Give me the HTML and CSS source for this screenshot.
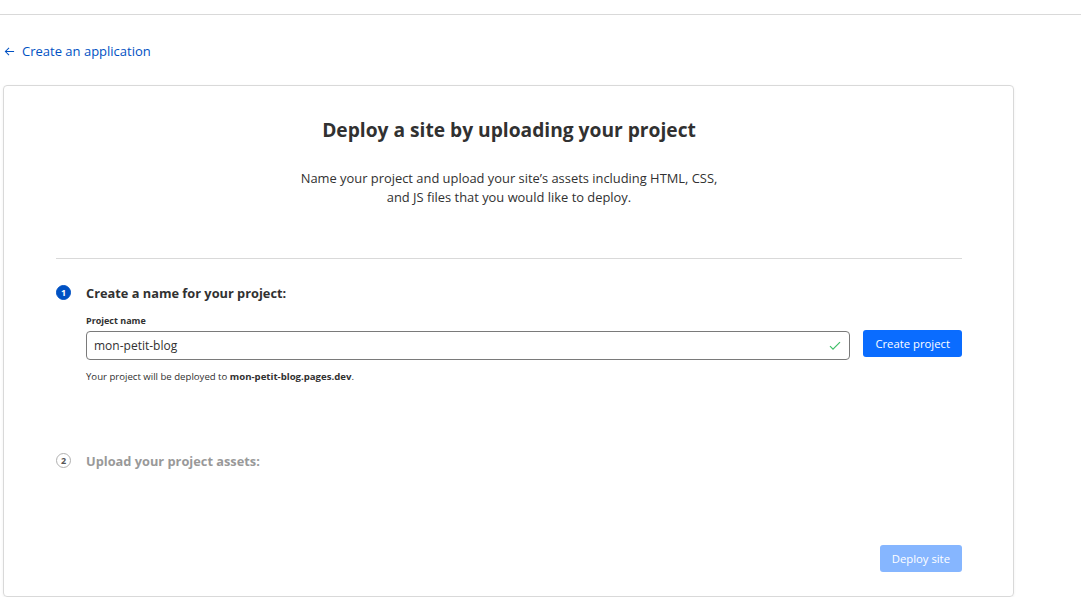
FILE: index.html
```html
<!DOCTYPE html>
<html lang="en">
<head>
  <meta charset="UTF-8" />
  <meta name="viewport" content="width=device-width, initial-scale=1.0"/>
  <title>Upload assets - Pages</title>
  <link rel="stylesheet" href="styles.css">
</head>
<body>

<div class="topbar"></div>

<main class="page">
  <a class="back-link" href="#">
    <svg width="11" height="11" viewBox="0 0 12 12" fill="none" stroke="currentColor" stroke-width="1.1">
      <path d="M11 6H1.5M5.5 2L1.5 6l4 4"/>
    </svg>
    Create an application
  </a>

  <section class="card">
    <h1>Deploy a site by uploading your project</h1>
    <p class="intro">Name your project and upload your site’s assets including HTML, CSS,<br>and JS files that you would like to deploy.</p>

    <hr class="divider">

    <div class="step">
      <div class="step-title">
        <span class="step-num active">1</span>
        <h2>Create a name for your project:</h2>
      </div>

      <div class="step-body">
        <label class="field-label" for="projectName">Project name</label>
        <div class="field-row">
          <div class="input-wrap">
            <input type="text" id="projectName" value="mon-petit-blog">
            <svg class="valid" width="12" height="10" viewBox="0 0 12 10" fill="none" stroke="#3fbf68" stroke-width="1.2">
              <path d="M1 5.2l3 3L11 1.2"/>
            </svg>
          </div>
          <button class="btn btn-primary">Create project</button>
        </div>
        <p class="hint">Your project will be deployed to <strong>mon-petit-blog.pages.dev</strong>.</p>
      </div>
    </div>

    <div class="step disabled">
      <div class="step-title">
        <span class="step-num">2</span>
        <h2>Upload your project assets:</h2>
      </div>
    </div>

    <div class="actions">
      <button class="btn btn-primary" disabled>Deploy site</button>
    </div>
  </section>
</main>

</body>
</html>
```

FILE: styles.css
```css
body {
  font-family: 'Open Sans', 'Noto Sans', sans-serif;
  margin: 0;
  background: #fff;
  color: #313131;
}
.topbar {
  height: 14px;
  border-bottom: 1px solid #d9d9d9;
}
.page {
  padding: 0 67px 0 3px;
}
.back-link {
  display: inline-flex;
  align-items: center;
  gap: 7px;
  margin: 27px 0 0 1px;
  font-size: 13px;
  color: #0051c3;
  text-decoration: none;
}
.card {
  margin-top: 23px;
  border: 1px solid #d9d9d9;
  border-radius: 4px;
  box-shadow: 0 1px 3px rgba(0,0,0,0.06);
  padding: 30px 51px 24px 52px;
  height: 456px;
  display: flex;
  flex-direction: column;
}
.card h1 {
  margin: 0;
  text-align: center;
  font-size: 19.2px;
  font-weight: 700;
  line-height: 28px;
  color: #313131;
}
.intro {
  margin: 25px 0 0;
  text-align: center;
  font-size: 12.9px;
  line-height: 19px;
  color: #313131;
}
.divider {
  border: none;
  border-top: 1px solid #d9d9d9;
  margin: 51px 0 0;
}
.step {
  margin-top: 24px;
}
.step-title {
  display: flex;
  align-items: center;
  gap: 15px;
}
.step-title h2 {
  margin: 0;
  font-size: 12.8px;
  font-weight: 700;
  line-height: 20px;
}
.step-num {
  width: 15px;
  height: 15px;
  box-sizing: border-box;
  border-radius: 50%;
  border: 1px solid #b0b0b0;
  display: flex;
  align-items: center;
  justify-content: center;
  font-size: 9px;
  font-weight: 700;
  color: #555;
}
.step-num.active {
  background: #0051c3;
  border-color: #0051c3;
  color: #fff;
}
.step-body {
  padding-left: 30px;
  margin-top: 11px;
}
.field-label {
  display: block;
  font-size: 9px;
  font-weight: 700;
  line-height: 14px;
  margin-bottom: 3px;
}
.field-row {
  display: flex;
  align-items: flex-start;
  gap: 13px;
}
.input-wrap {
  flex: 1;
  position: relative;
}
.input-wrap input {
  width: 100%;
  box-sizing: border-box;
  height: 29px;
  border: 1px solid #7a7a7a;
  border-radius: 4px;
  padding: 0 7px;
  font-family: inherit;
  font-size: 12px;
  color: #313131;
}
.input-wrap .valid {
  position: absolute;
  right: 9px;
  top: 10px;
}
.btn {
  font-family: inherit;
  font-size: 11.3px;
  border: none;
  border-radius: 3px;
  color: #fff;
  padding: 0 12px;
  height: 27px;
  cursor: pointer;
}
.field-row .btn {
  margin-top: -1px;
}
.btn-primary {
  background: #0a6cff;
}
.btn-primary:disabled {
  background: #86b6ff;
  cursor: default;
}
.hint {
  margin: 10px 0 0;
  font-size: 9.6px;
  line-height: 14px;
  color: #313131;
}
.step.disabled {
  margin-top: 67px;
}
.step.disabled h2 {
  color: #999;
}
.actions {
  margin-top: auto;
  display: flex;
  justify-content: flex-end;
}
```
